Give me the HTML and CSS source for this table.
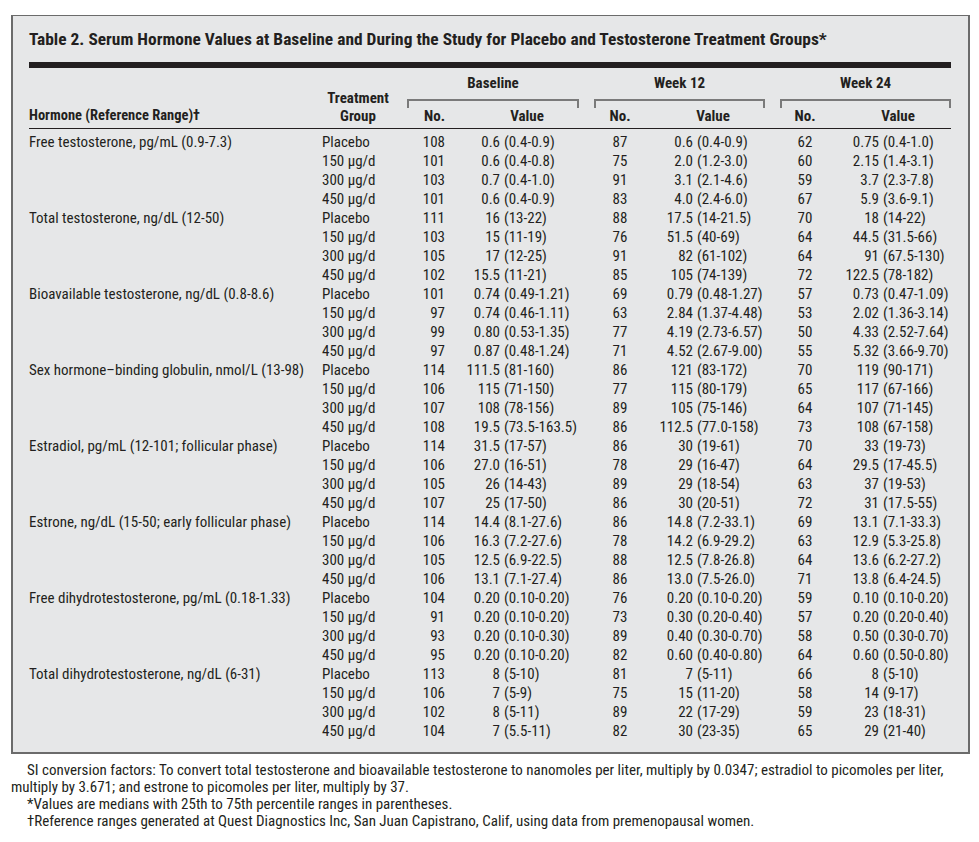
FILE: index.html
```html
<!DOCTYPE html>
<html>
<head>
<meta charset="utf-8">
<title>Table 2</title>
<link rel="stylesheet" href="styles.css">
</head>
<body>
<div class="box">
  <div class="title">Table 2. Serum Hormone Values at Baseline and During the Study for Placebo and Testosterone Treatment Groups*</div>
  <div class="thick"></div>
  <div class="head">
    <div class="h-hormone">Hormone (Reference Range)†</div>
    <div class="h-group">Treatment<br>Group</div>
    <div class="h-span sp1">Baseline</div>
    <div class="h-span sp2">Week 12</div>
    <div class="h-span sp3">Week 24</div>
    <div class="br sp1"></div>
    <div class="br sp2"></div>
    <div class="br sp3"></div>
    <div class="h-no c3">No.</div>
    <div class="h-val c4">Value</div>
    <div class="h-no c5">No.</div>
    <div class="h-val c6">Value</div>
    <div class="h-no c7">No.</div>
    <div class="h-val c8">Value</div>
  </div>
  <div class="body">
    <div class="r"><span class="hn">Free testosterone, pg/mL (0.9-7.3)</span><span class="g">Placebo</span><span class="n">108</span><span class="v b"><span class="m">0.6</span>(0.4-0.9)</span><span class="n2">87</span><span class="v w"><span class="m">0.6</span>(0.4-0.9)</span><span class="n2">62</span><span class="v x"><span class="m">0.75</span>(0.4-1.0)</span></div>
    <div class="r"><span class="hn"></span><span class="g">150 μg/d</span><span class="n">101</span><span class="v b"><span class="m">0.6</span>(0.4-0.8)</span><span class="n2">75</span><span class="v w"><span class="m">2.0</span>(1.2-3.0)</span><span class="n2">60</span><span class="v x"><span class="m">2.15</span>(1.4-3.1)</span></div>
    <div class="r"><span class="hn"></span><span class="g">300 μg/d</span><span class="n">103</span><span class="v b"><span class="m">0.7</span>(0.4-1.0)</span><span class="n2">91</span><span class="v w"><span class="m">3.1</span>(2.1-4.6)</span><span class="n2">59</span><span class="v x"><span class="m">3.7</span>(2.3-7.8)</span></div>
    <div class="r"><span class="hn"></span><span class="g">450 μg/d</span><span class="n">101</span><span class="v b"><span class="m">0.6</span>(0.4-0.9)</span><span class="n2">83</span><span class="v w"><span class="m">4.0</span>(2.4-6.0)</span><span class="n2">67</span><span class="v x"><span class="m">5.9</span>(3.6-9.1)</span></div>

    <div class="r"><span class="hn">Total testosterone, ng/dL (12-50)</span><span class="g">Placebo</span><span class="n">111</span><span class="v b"><span class="m">16</span>(13-22)</span><span class="n2">88</span><span class="v w"><span class="m">17.5</span>(14-21.5)</span><span class="n2">70</span><span class="v x"><span class="m">18</span>(14-22)</span></div>
    <div class="r"><span class="hn"></span><span class="g">150 μg/d</span><span class="n">103</span><span class="v b"><span class="m">15</span>(11-19)</span><span class="n2">76</span><span class="v w"><span class="m">51.5</span>(40-69)</span><span class="n2">64</span><span class="v x"><span class="m">44.5</span>(31.5-66)</span></div>
    <div class="r"><span class="hn"></span><span class="g">300 μg/d</span><span class="n">105</span><span class="v b"><span class="m">17</span>(12-25)</span><span class="n2">91</span><span class="v w"><span class="m">82</span>(61-102)</span><span class="n2">64</span><span class="v x"><span class="m">91</span>(67.5-130)</span></div>
    <div class="r"><span class="hn"></span><span class="g">450 μg/d</span><span class="n">102</span><span class="v b"><span class="m">15.5</span>(11-21)</span><span class="n2">85</span><span class="v w"><span class="m">105</span>(74-139)</span><span class="n2">72</span><span class="v x"><span class="m">122.5</span>(78-182)</span></div>

    <div class="r"><span class="hn">Bioavailable testosterone, ng/dL (0.8-8.6)</span><span class="g">Placebo</span><span class="n">101</span><span class="v b"><span class="m">0.74</span>(0.49-1.21)</span><span class="n2">69</span><span class="v w"><span class="m">0.79</span>(0.48-1.27)</span><span class="n2">57</span><span class="v x"><span class="m">0.73</span>(0.47-1.09)</span></div>
    <div class="r"><span class="hn"></span><span class="g">150 μg/d</span><span class="n">97</span><span class="v b"><span class="m">0.74</span>(0.46-1.11)</span><span class="n2">63</span><span class="v w"><span class="m">2.84</span>(1.37-4.48)</span><span class="n2">53</span><span class="v x"><span class="m">2.02</span>(1.36-3.14)</span></div>
    <div class="r"><span class="hn"></span><span class="g">300 μg/d</span><span class="n">99</span><span class="v b"><span class="m">0.80</span>(0.53-1.35)</span><span class="n2">77</span><span class="v w"><span class="m">4.19</span>(2.73-6.57)</span><span class="n2">50</span><span class="v x"><span class="m">4.33</span>(2.52-7.64)</span></div>
    <div class="r"><span class="hn"></span><span class="g">450 μg/d</span><span class="n">97</span><span class="v b"><span class="m">0.87</span>(0.48-1.24)</span><span class="n2">71</span><span class="v w"><span class="m">4.52</span>(2.67-9.00)</span><span class="n2">55</span><span class="v x"><span class="m">5.32</span>(3.66-9.70)</span></div>

    <div class="r"><span class="hn">Sex hormone–binding globulin, nmol/L (13-98)</span><span class="g">Placebo</span><span class="n">114</span><span class="v b"><span class="m">111.5</span>(81-160)</span><span class="n2">86</span><span class="v w"><span class="m">121</span>(83-172)</span><span class="n2">70</span><span class="v x"><span class="m">119</span>(90-171)</span></div>
    <div class="r"><span class="hn"></span><span class="g">150 μg/d</span><span class="n">106</span><span class="v b"><span class="m">115</span>(71-150)</span><span class="n2">77</span><span class="v w"><span class="m">115</span>(80-179)</span><span class="n2">65</span><span class="v x"><span class="m">117</span>(67-166)</span></div>
    <div class="r"><span class="hn"></span><span class="g">300 μg/d</span><span class="n">107</span><span class="v b"><span class="m">108</span>(78-156)</span><span class="n2">89</span><span class="v w"><span class="m">105</span>(75-146)</span><span class="n2">64</span><span class="v x"><span class="m">107</span>(71-145)</span></div>
    <div class="r"><span class="hn"></span><span class="g">450 μg/d</span><span class="n">108</span><span class="v b"><span class="m">19.5</span>(73.5-163.5)</span><span class="n2">86</span><span class="v w"><span class="m">112.5</span>(77.0-158)</span><span class="n2">73</span><span class="v x"><span class="m">108</span>(67-158)</span></div>

    <div class="r"><span class="hn">Estradiol, pg/mL (12-101; follicular phase)</span><span class="g">Placebo</span><span class="n">114</span><span class="v b"><span class="m">31.5</span>(17-57)</span><span class="n2">86</span><span class="v w"><span class="m">30</span>(19-61)</span><span class="n2">70</span><span class="v x"><span class="m">33</span>(19-73)</span></div>
    <div class="r"><span class="hn"></span><span class="g">150 μg/d</span><span class="n">106</span><span class="v b"><span class="m">27.0</span>(16-51)</span><span class="n2">78</span><span class="v w"><span class="m">29</span>(16-47)</span><span class="n2">64</span><span class="v x"><span class="m">29.5</span>(17-45.5)</span></div>
    <div class="r"><span class="hn"></span><span class="g">300 μg/d</span><span class="n">105</span><span class="v b"><span class="m">26</span>(14-43)</span><span class="n2">89</span><span class="v w"><span class="m">29</span>(18-54)</span><span class="n2">63</span><span class="v x"><span class="m">37</span>(19-53)</span></div>
    <div class="r"><span class="hn"></span><span class="g">450 μg/d</span><span class="n">107</span><span class="v b"><span class="m">25</span>(17-50)</span><span class="n2">86</span><span class="v w"><span class="m">30</span>(20-51)</span><span class="n2">72</span><span class="v x"><span class="m">31</span>(17.5-55)</span></div>

    <div class="r"><span class="hn">Estrone, ng/dL (15-50; early follicular phase)</span><span class="g">Placebo</span><span class="n">114</span><span class="v b"><span class="m">14.4</span>(8.1-27.6)</span><span class="n2">86</span><span class="v w"><span class="m">14.8</span>(7.2-33.1)</span><span class="n2">69</span><span class="v x"><span class="m">13.1</span>(7.1-33.3)</span></div>
    <div class="r"><span class="hn"></span><span class="g">150 μg/d</span><span class="n">106</span><span class="v b"><span class="m">16.3</span>(7.2-27.6)</span><span class="n2">78</span><span class="v w"><span class="m">14.2</span>(6.9-29.2)</span><span class="n2">63</span><span class="v x"><span class="m">12.9</span>(5.3-25.8)</span></div>
    <div class="r"><span class="hn"></span><span class="g">300 μg/d</span><span class="n">105</span><span class="v b"><span class="m">12.5</span>(6.9-22.5)</span><span class="n2">88</span><span class="v w"><span class="m">12.5</span>(7.8-26.8)</span><span class="n2">64</span><span class="v x"><span class="m">13.6</span>(6.2-27.2)</span></div>
    <div class="r"><span class="hn"></span><span class="g">450 μg/d</span><span class="n">106</span><span class="v b"><span class="m">13.1</span>(7.1-27.4)</span><span class="n2">86</span><span class="v w"><span class="m">13.0</span>(7.5-26.0)</span><span class="n2">71</span><span class="v x"><span class="m">13.8</span>(6.4-24.5)</span></div>

    <div class="r"><span class="hn">Free dihydrotestosterone, pg/mL (0.18-1.33)</span><span class="g">Placebo</span><span class="n">104</span><span class="v b"><span class="m">0.20</span>(0.10-0.20)</span><span class="n2">76</span><span class="v w"><span class="m">0.20</span>(0.10-0.20)</span><span class="n2">59</span><span class="v x"><span class="m">0.10</span>(0.10-0.20)</span></div>
    <div class="r"><span class="hn"></span><span class="g">150 μg/d</span><span class="n">91</span><span class="v b"><span class="m">0.20</span>(0.10-0.20)</span><span class="n2">73</span><span class="v w"><span class="m">0.30</span>(0.20-0.40)</span><span class="n2">57</span><span class="v x"><span class="m">0.20</span>(0.20-0.40)</span></div>
    <div class="r"><span class="hn"></span><span class="g">300 μg/d</span><span class="n">93</span><span class="v b"><span class="m">0.20</span>(0.10-0.30)</span><span class="n2">89</span><span class="v w"><span class="m">0.40</span>(0.30-0.70)</span><span class="n2">58</span><span class="v x"><span class="m">0.50</span>(0.30-0.70)</span></div>
    <div class="r"><span class="hn"></span><span class="g">450 μg/d</span><span class="n">95</span><span class="v b"><span class="m">0.20</span>(0.10-0.20)</span><span class="n2">82</span><span class="v w"><span class="m">0.60</span>(0.40-0.80)</span><span class="n2">64</span><span class="v x"><span class="m">0.60</span>(0.50-0.80)</span></div>

    <div class="r"><span class="hn">Total dihydrotestosterone, ng/dL (6-31)</span><span class="g">Placebo</span><span class="n">113</span><span class="v b"><span class="m">8</span>(5-10)</span><span class="n2">81</span><span class="v w"><span class="m">7</span>(5-11)</span><span class="n2">66</span><span class="v x"><span class="m">8</span>(5-10)</span></div>
    <div class="r"><span class="hn"></span><span class="g">150 μg/d</span><span class="n">106</span><span class="v b"><span class="m">7</span>(5-9)</span><span class="n2">75</span><span class="v w"><span class="m">15</span>(11-20)</span><span class="n2">58</span><span class="v x"><span class="m">14</span>(9-17)</span></div>
    <div class="r"><span class="hn"></span><span class="g">300 μg/d</span><span class="n">102</span><span class="v b"><span class="m">8</span>(5-11)</span><span class="n2">89</span><span class="v w"><span class="m">22</span>(17-29)</span><span class="n2">59</span><span class="v x"><span class="m">23</span>(18-31)</span></div>
    <div class="r"><span class="hn"></span><span class="g">450 μg/d</span><span class="n">104</span><span class="v b"><span class="m">7</span>(5.5-11)</span><span class="n2">82</span><span class="v w"><span class="m">30</span>(23-35)</span><span class="n2">65</span><span class="v x"><span class="m">29</span>(21-40)</span></div>
  </div>
</div>
<div class="notes">
  <p>SI conversion factors: To convert total testosterone and bioavailable testosterone to nanomoles per liter, multiply by 0.0347; estradiol to picomoles per liter, multiply by 3.671; and estrone to picomoles per liter, multiply by 37.</p>
  <p>*Values are medians with 25th to 75th percentile ranges in parentheses.</p>
  <p>†Reference ranges generated at Quest Diagnostics Inc, San Juan Capistrano, Calif, using data from premenopausal women.</p>
</div>
</body>
</html>
```
FILE: styles.css
```css
* { box-sizing: border-box; }

body {
  margin: 0;
  padding: 15px 9px 0 11px;
  background: #ffffff;
  color: #231f20;
  font-family: Roboto, "Liberation Sans", sans-serif;
  font-stretch: 75%;
  font-size: 15px;
}

.box {
  width: 959px;
  background: #e6e7e8;
  border: 2px solid #6b6b6b;
  border-top-width: 1px;
  padding: 13px 17px 11px 16px;
}

.title {
  font-weight: bold;
  font-size: 17.4px;
  line-height: 20px;
  white-space: nowrap;
}

.thick {
  margin-top: 13px;
  height: 6px;
  background: #231f20;
}

.head, .r {
  display: grid;
  grid-template-columns: 293px 72px 51px 145px 60px 126px 58px 117px;
}

.head {
  grid-template-rows: 20px 15px 16px;
  padding: 5px 0 4px;
  border-bottom: 1px solid #231f20;
  font-weight: bold;
  font-size: 15px;
}

.h-hormone {
  grid-column: 1;
  grid-row: 1 / 4;
  align-self: end;
  line-height: 16px;
  white-space: nowrap;
  font-size: 14.5px;
}

.h-group {
  grid-column: 2;
  grid-row: 1 / 4;
  align-self: end;
  text-align: center;
  line-height: 18px;
  margin-bottom: -1px;
}

.h-span {
  grid-row: 1;
  text-align: center;
  line-height: 20px;
}

.br {
  grid-row: 2;
  margin-top: 6px;
  height: 9px;
  border: 2px solid #7a7a7a;
  border-bottom: none;
}

.sp1 { grid-column: 3 / 5; margin-left: 13px; margin-right: 11px; }
.sp2 { grid-column: 5 / 7; margin-left: 4px; margin-right: 11px; }
.sp3 { grid-column: 7 / 9; margin-left: 4px; margin-right: 0; }

.h-no, .h-val {
  grid-row: 3;
  line-height: 16px;
}

.c3 { grid-column: 3; text-align: right; }
.c4 { grid-column: 4; text-align: center; padding-left: 19px; }
.c5 { grid-column: 5; text-align: center; }
.c6 { grid-column: 6; text-align: center; }
.c7 { grid-column: 7; text-align: center; }
.c8 { grid-column: 8; text-align: center; padding-left: 11px; }

.body {
  padding-top: 4px;
}

.r {
  height: 19px;
  line-height: 19px;
  white-space: nowrap;
}

.n { text-align: right; }
.n2 { text-align: center; }

.v {
  display: flex;
}

.m {
  text-align: right;
  padding-right: 4px;
  flex: none;
}

.v.b .m { width: 59px; }
.v.w .m { width: 47px; }
.v.x .m { width: 49px; }

.notes {
  width: 959px;
  margin-top: 8px;
  font-size: 15px;
  line-height: 17px;
}

.notes p {
  margin: 0;
  text-indent: 16px;
}
```
